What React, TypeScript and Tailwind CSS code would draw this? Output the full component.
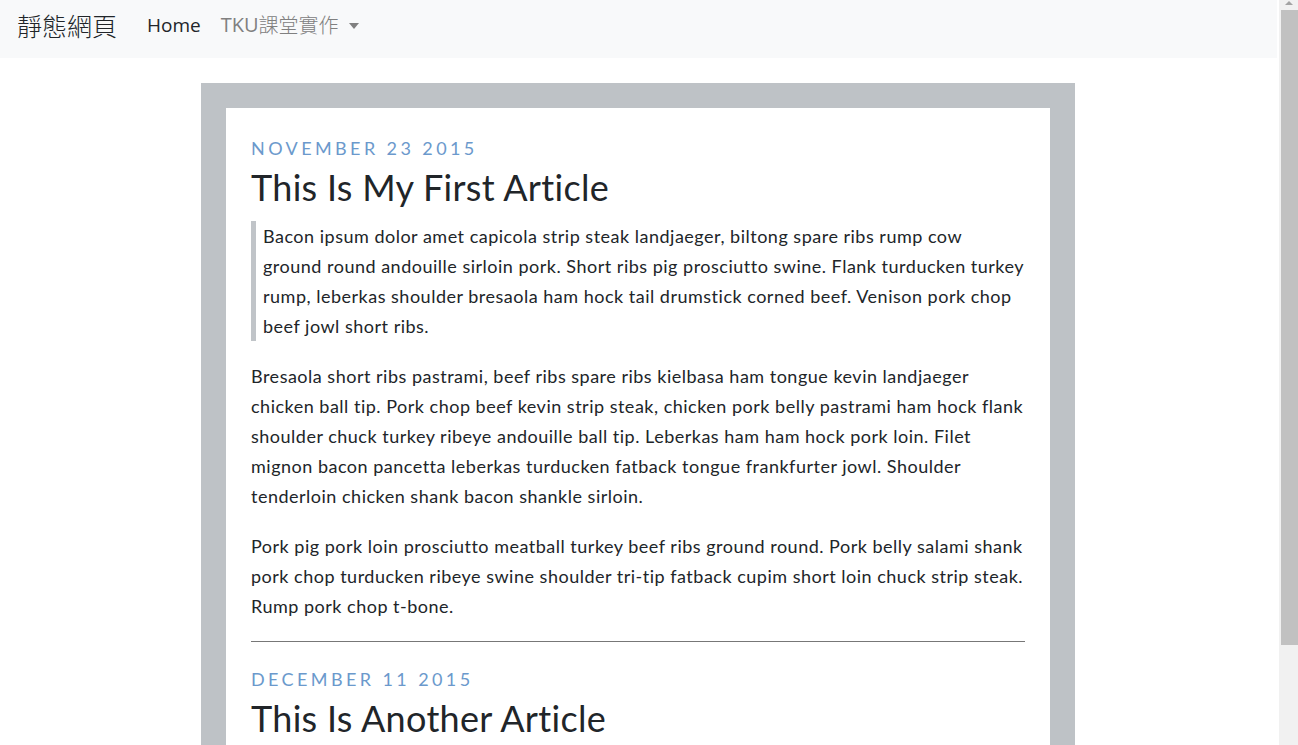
import React from 'react';

const articles = [
  {
    date: 'November 23 2015',
    title: 'This Is My First Article',
    quote:
      'Bacon ipsum dolor amet capicola strip steak landjaeger, biltong spare ribs rump cow ground round andouille sirloin pork. Short ribs pig prosciutto swine. Flank turducken turkey rump, leberkas shoulder bresaola ham hock tail drumstick corned beef. Venison pork chop beef jowl short ribs.',
    paragraphs: [
      'Bresaola short ribs pastrami, beef ribs spare ribs kielbasa ham tongue kevin landjaeger chicken ball tip. Pork chop beef kevin strip steak, chicken pork belly pastrami ham hock flank shoulder chuck turkey ribeye andouille ball tip. Leberkas ham ham hock pork loin. Filet mignon bacon pancetta leberkas turducken fatback tongue frankfurter jowl. Shoulder tenderloin chicken shank bacon shankle sirloin.',
      'Pork pig pork loin prosciutto meatball turkey beef ribs ground round. Pork belly salami shank pork chop turducken ribeye swine shoulder tri-tip fatback cupim short loin chuck strip steak. Rump pork chop t-bone.',
    ],
  },
  {
    date: 'December 11 2015',
    title: 'This Is Another Article',
    quote:
      'Turducken shankle pork belly, beef ribs kevin tenderloin jowl. Chuck landjaeger ham hock, tri-tip pig shoulder swine corned beef short loin.',
    paragraphs: [
      'Spare ribs boudin pork loin, drumstick turkey tail kielbasa sirloin ham hock pancetta shank ball tip brisket.',
    ],
  },
];

const Navbar: React.FC = () => (
  <nav className="h-[58px] bg-[#f8f9fa] flex items-center pb-[8px] shrink-0">
    <a className="ml-[17px] text-[25px] leading-none font-light text-[#212529] font-['Noto_Sans_CJK_TC',sans-serif]">靜態網頁</a>
    <a className="ml-[30px] text-[19px] text-[#212529] font-['Open_Sans','Noto_Sans_CJK_TC',sans-serif]">Home</a>
    <a className="ml-[20px] flex items-center text-[20px] text-[#808080] font-['Open_Sans','Noto_Sans_CJK_TC',sans-serif]">
      <span>TKU</span>
      <span className="font-light font-['Noto_Sans_CJK_TC',sans-serif]">課堂實作</span>
      <span className="ml-[10px] mt-[1px] w-0 h-0 border-l-[5px] border-r-[5px] border-t-[6px] border-l-transparent border-r-transparent border-t-[#808080]"></span>
    </a>
  </nav>
);

const Scrollbar: React.FC = () => (
  <div className="w-[21px] h-full flex bg-white shrink-0">
    <div className="ml-[2px] flex-1 bg-[#f1f1f1] flex flex-col items-stretch">
      <div className="h-[10px] flex justify-center pt-[1px]">
        <span className="w-0 h-0 border-l-[4px] border-r-[4px] border-b-[4px] border-l-transparent border-r-transparent border-b-[#a3a3a3]"></span>
      </div>
      <div className="ml-[2px] h-[635px] bg-[#c1c1c1]"></div>
    </div>
  </div>
);

const App: React.FC = () => {
  return (
    <div className="h-[745px] w-[1298px] overflow-hidden flex bg-white">
      <div className="flex-1 flex flex-col overflow-hidden">
        <Navbar />
        <main className="pl-[201px] pt-[25px]">
          <div className="w-[874px] bg-[#bec2c6] p-[25px] pb-0">
            <div className="bg-white px-[25px] pt-[25px] pb-[40px] font-['Lato','Open_Sans',sans-serif] text-[#212529]">
              {articles.map((a, i) => (
                <article key={i}>
                  {i > 0 && <hr className="mt-[20px] mb-[22px] border-0 border-t border-[#777]" />}
                  <p className="uppercase text-[18px] leading-[30px] tracking-[3.4px] text-[#6b99cc]">{a.date}</p>
                  <h2 className="text-[36px] leading-[44px] mt-[2px] mb-[12px] tracking-[0.3px]">{a.title}</h2>
                  <blockquote className="border-l-[5px] border-[#c0c4c8] pl-[7px] text-[18px] leading-[30px] tracking-[0.5px]">
                    {a.quote}
                  </blockquote>
                  {a.paragraphs.map((p, j) => (
                    <p key={j} className="mt-[20px] text-[18px] leading-[30px] tracking-[0.5px]">{p}</p>
                  ))}
                </article>
              ))}
            </div>
          </div>
        </main>
      </div>
      <Scrollbar />
    </div>
  );
};

export default App;
